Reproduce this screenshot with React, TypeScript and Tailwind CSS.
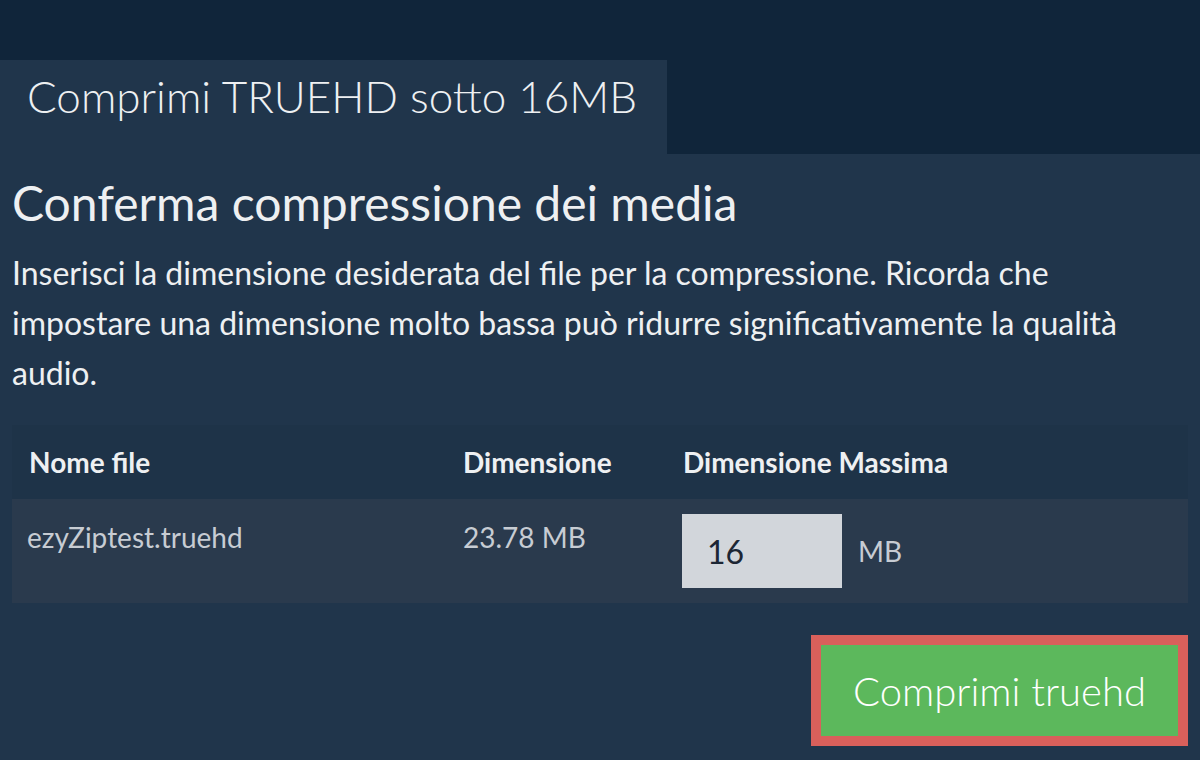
import { useState } from "react";

const font = { fontFamily: "Lato, 'Noto Sans', sans-serif" };

function FileTable() {
  const [size, setSize] = useState("16");

  return (
    <div className="mt-[27px] w-full">
      <div className="grid h-[74px] grid-cols-[434px_220px_1fr] items-center bg-[#1e3348] text-[28px] font-bold text-[#eef0f2]">
        <div className="pl-[17px]">Nome file</div>
        <div className="pl-[17px]">Dimensione</div>
        <div className="pl-[17px]">Dimensione Massima</div>
      </div>
      <div className="grid h-[104px] grid-cols-[434px_220px_1fr] bg-[#2a3a4d] text-[28px] text-[#c7ccd3]">
        <div className="pl-[15px] pt-[17px]">ezyZiptest.truehd</div>
        <div className="pl-[17px] pt-[17px]">23.78 MB</div>
        <div className="flex items-center gap-[16px] self-start pl-[16px] pt-[15px]">
          <input
            value={size}
            onChange={(e) => setSize(e.target.value)}
            className="h-[74px] w-[160px] bg-[#d2d6db] px-[25px] text-[32px] text-[#1c2634] outline-none"
            style={font}
          />
          <span>MB</span>
        </div>
      </div>
    </div>
  );
}

export default function App() {
  return (
    <div className="h-[760px] w-[1200px] overflow-hidden bg-[#20354b]" style={font}>
      <div className="bg-[#10253a] pt-[60px]">
        <div className="h-[94px] w-[667px] bg-[#20354b] pl-[27px] pt-[14px]">
          <h2 className="text-[44px] font-light leading-none text-[#eef0f2]">
            Comprimi TRUEHD sotto 16MB
          </h2>
        </div>
      </div>

      <div className="px-[12px]">
        <h1 className="mt-[20px] text-[48px] leading-[58px] text-[#eef0f2]">
          Conferma compressione dei media
        </h1>
        <p className="mt-[16px] max-w-[1150px] text-[32px] leading-[50px] text-[#eef0f2]">
          Inserisci la dimensione desiderata del file per la compressione. Ricorda che
          impostare una dimensione molto bassa può ridurre significativamente la qualità
          audio.
        </p>

        <FileTable />

        <div className="mt-[32px] flex justify-end">
          <button className="h-[111px] w-[377px] border-[10px] border-[#d9605b] bg-[#5cb85c] text-[40px] font-light text-white">
            Comprimi truehd
          </button>
        </div>
      </div>
    </div>
  );
}
